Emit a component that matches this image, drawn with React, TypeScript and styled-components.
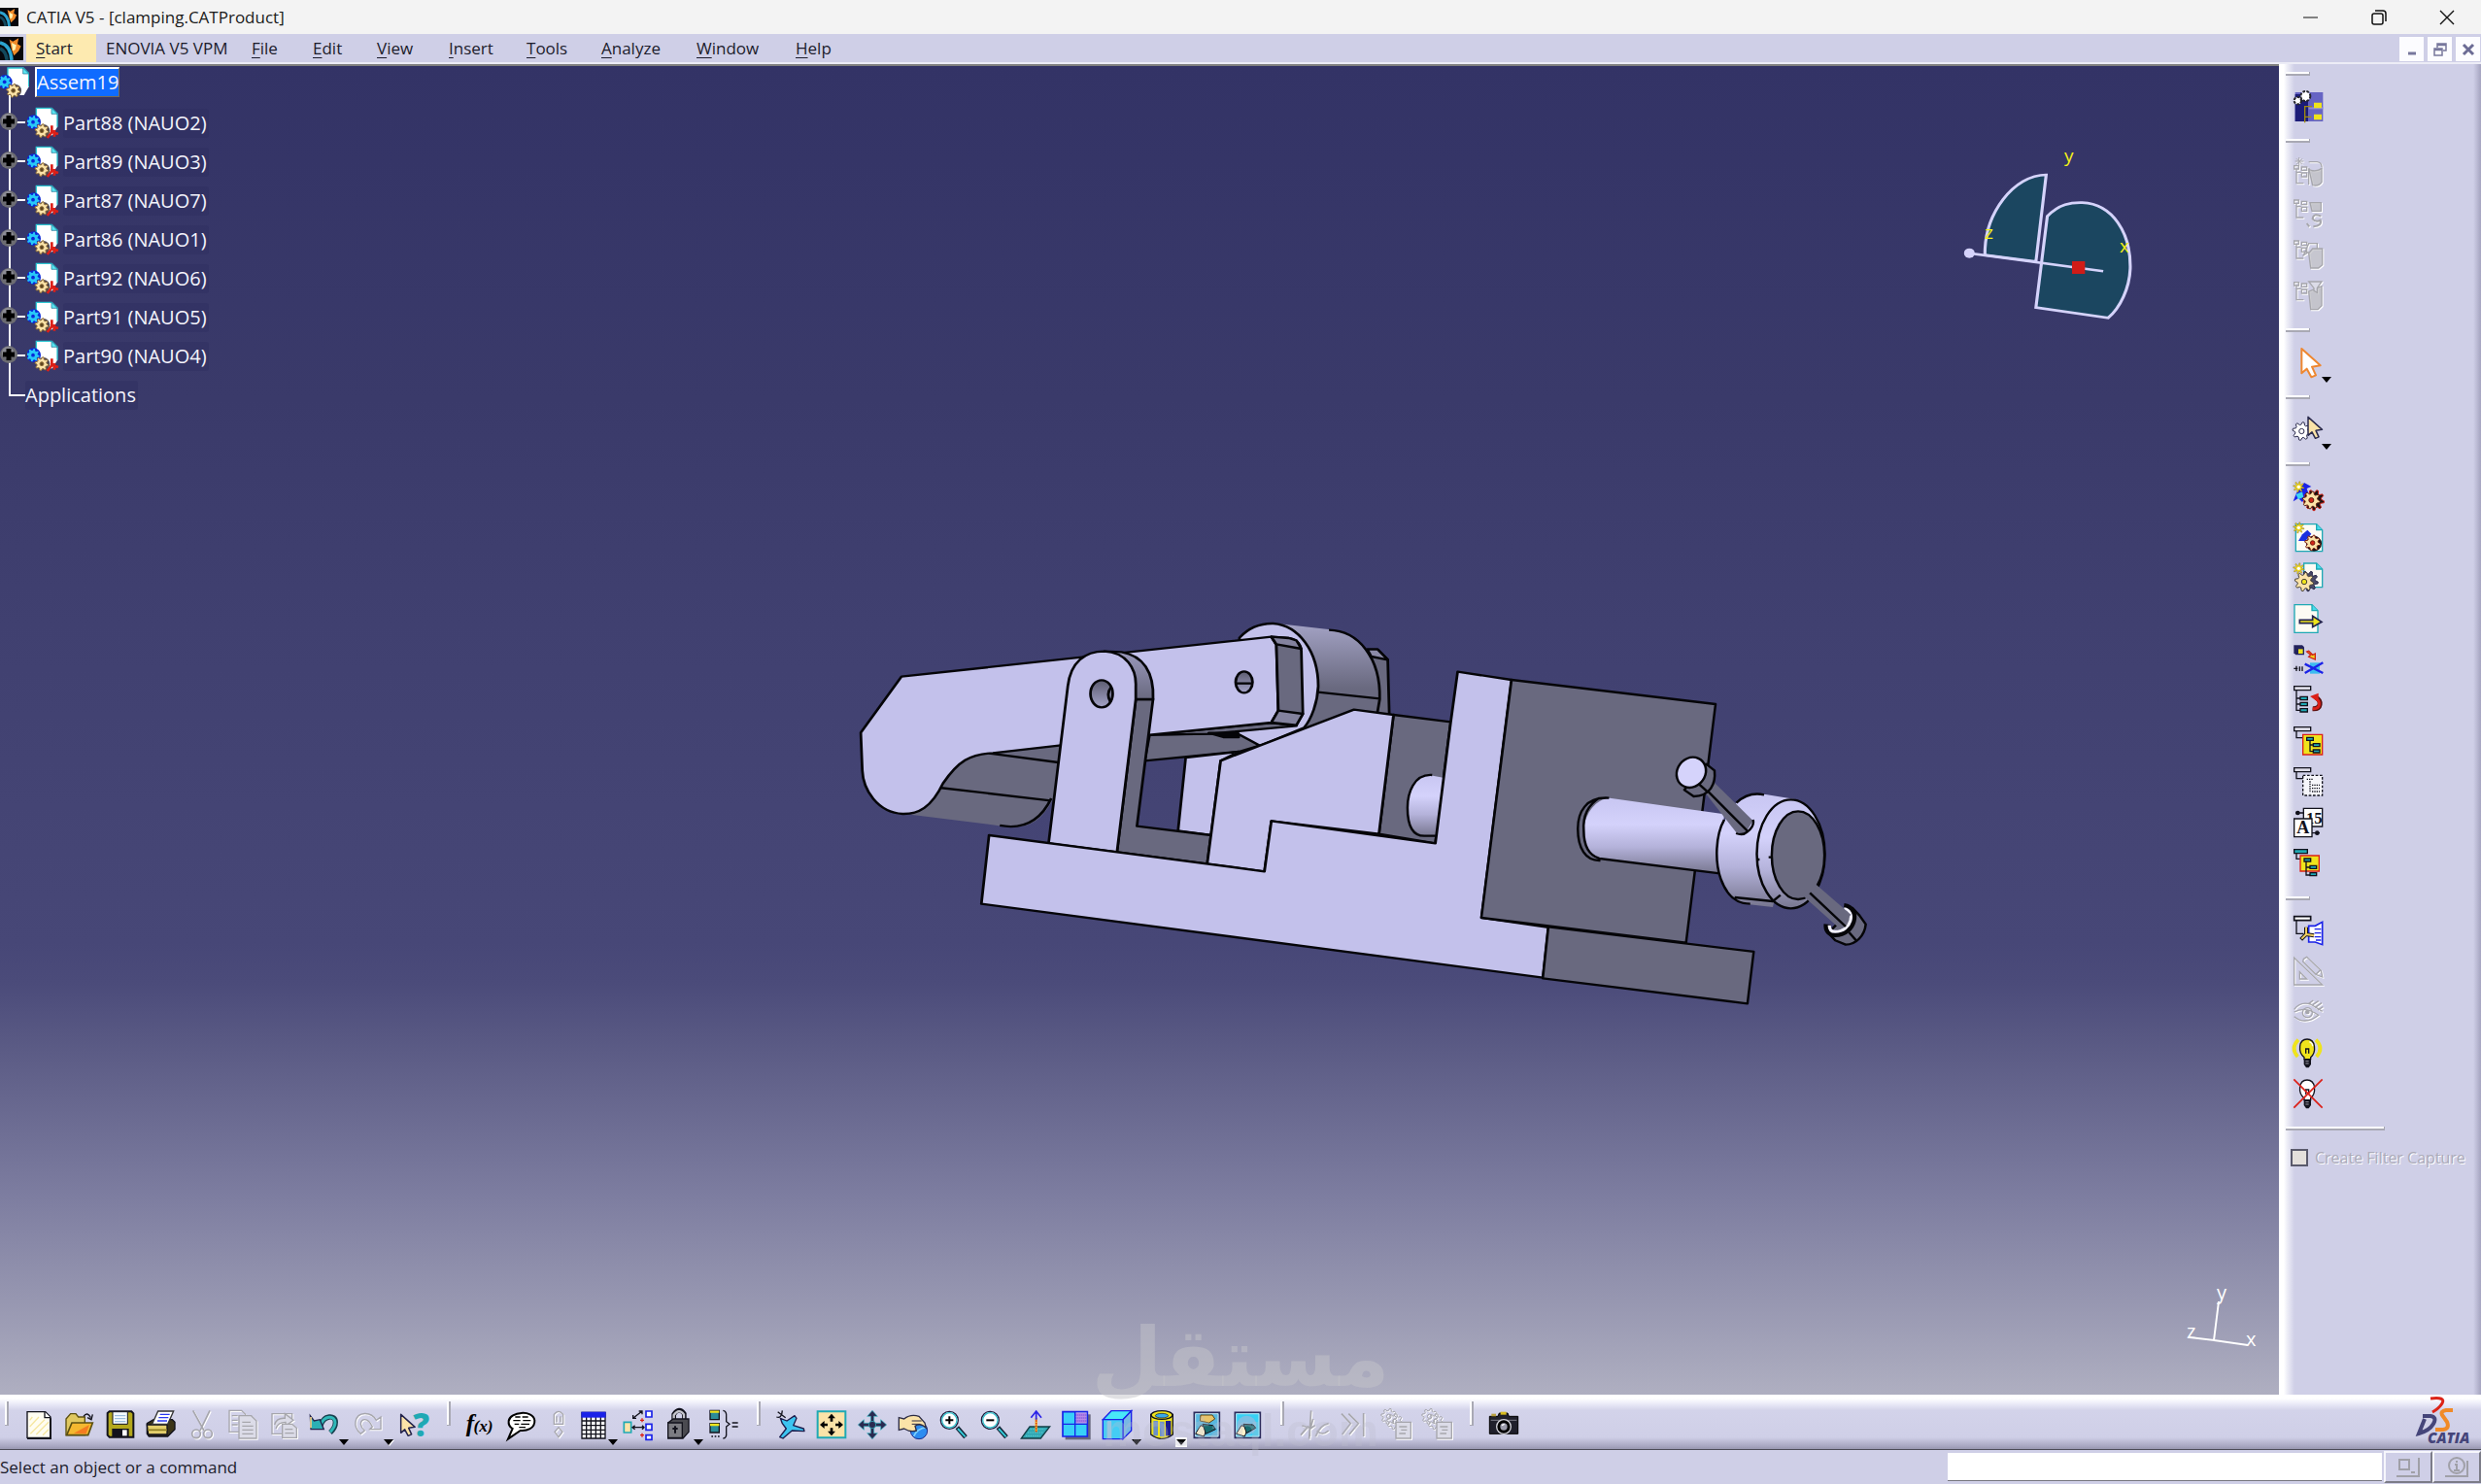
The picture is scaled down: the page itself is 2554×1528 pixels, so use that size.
import React from "react";
import styled, { createGlobalStyle } from "styled-components";

const UI = `"Open Sans", "Noto Sans", sans-serif`;
const panel = "#cfcfe7";

const GlobalStyle = createGlobalStyle`
  * { box-sizing: border-box; }
  body { margin: 0; background: ${panel}; font-family: ${UI}; color: #1c1c2c; }
  button { font: inherit; color: inherit; border: 0; padding: 0; background: none; cursor: pointer; }
  ul { list-style: none; margin: 0; padding: 0; }
`;

const Shell = styled.div`
  display: grid;
  grid-template-rows: 35px 33px 1fr 57px 35px;
  height: 100vh;
  overflow: hidden;
`;

const TitleBar = styled.header`
  display: flex;
  align-items: center;
  background: #f3f3f3;
`;
const Title = styled.h1`
  flex: 1;
  margin: 0 0 0 8px;
  font-size: 17px;
  font-weight: 400;
  line-height: 24px;
  color: #1a1a1a;
`;
const WindowButton = styled.button`
  display: grid;
  place-items: center;
  width: 70px;
  height: 32px;
`;

const MenuBar = styled.nav`
  display: flex;
  align-items: stretch;
  background: ${panel};
  border-bottom: 2px solid #7f7f7f;
  box-shadow: inset 0 -2px 0 #ececf6;
  padding-bottom: 2px;
`;
const MenuIcon = styled.div`
  display: flex;
  align-items: center;
  width: 27px;
`;
const MenuItem = styled.button<{ $width: number; $active?: boolean }>`
  width: ${(p) => p.$width}px;
  padding-left: 10px;
  text-align: left;
  white-space: nowrap;
  font-size: 17px;
  line-height: 29px;
  background: ${(p) => (p.$active ? "#fdeab0" : "none")};
`;
const Key = styled.span`
  text-decoration: underline;
  text-underline-offset: 3px;
`;
const ChildControls = styled.div`
  display: flex;
  gap: 4px;
  margin-left: auto;
  padding: 3px 1px 1px 0;
`;
const ChildButton = styled.button`
  display: grid;
  place-items: center;
  width: 25px;
  background: #fcfcff;
`;

const Work = styled.div`
  display: grid;
  grid-template-columns: 1fr 208px;
  min-height: 0;
`;
const Viewport = styled.main`
  position: relative;
  min-width: 0;
  overflow: hidden;
  background: linear-gradient(#333366 0%, #3a3a6a 25%, #404070 42%, #474777 66%, #4b4b7a 69%, #5b5b85 74%, #7d7da0 85%, #9797b1 93%, #afafc1 100%);
`;
const Scene = styled.svg`
  position: absolute;
  inset: 0;
  width: 100%;
  height: 100%;
`;
const Tree = styled.ul`
  position: relative;
  color: #f4f4fc;
  font-size: 20px;
`;
const TreeRow = styled.li`
  display: flex;
  align-items: center;
  height: 40px;
`;
const RootRow = styled(TreeRow)`
  height: 39px;
  align-items: flex-start;
`;
const Toggle = styled.button`
  display: block;
  width: 28px;
  height: 40px;
`;
const NodeLabel = styled.span<{ $gap?: number }>`
  margin-left: ${(p) => p.$gap ?? 0}px;
  padding-right: 2px;
  line-height: 30px;
  border-radius: 3px;
  background: rgba(44, 44, 96, 0.4);
`;
const SelectedLabel = styled.span`
  margin: 1px 0 0 6px;
  line-height: 28px;
  background: #0f6bff;
  border: 1px solid #7a6a50;
  border-top: 2px solid #fff;
  border-left: 2px solid #fff;
`;

const Side = styled.aside`
  padding: 8px 0 0 7px;
  margin-top: -2px;
  background: linear-gradient(90deg, #fff 0 5px, #f0f0f8 8px, ${panel} 16px calc(100% - 8px), #a5a4c0 100%);
`;
const SideGroup = styled.section`
  display: flex;
  flex-direction: column;
  align-items: flex-start;
  padding-bottom: 13px;
`;
const SideHandle = styled.div<{ $wide?: boolean }>`
  width: ${(p) => (p.$wide ? 102 : 25)}px;
  height: 4px;
  margin-bottom: ${(p) => (p.$wide ? 16 : 10)}px;
  background: #fff;
  border-right: 1px solid #a5a5b0;
  border-bottom: 2px solid #a9a9b4;
`;
const ToolButton = styled.button<{ $width?: number; $disabled?: boolean }>`
  position: relative;
  display: flex;
  align-items: center;
  flex: none;
  width: 48px;
  height: 42px;
  padding-left: 7px;
  color: #a6a6ac;
  svg { overflow: visible; flex: none; }
  filter: ${(p) => (p.$disabled ? "drop-shadow(1px 1px 0 #fff)" : "none")};
`;
const DropMark = styled.span<{ $boxed?: boolean }>`
  position: absolute;
  right: 0;
  bottom: -2px;
  padding: 2px 1px;
  background: ${(p) => (p.$boxed ? "#fff" : "none")};
  &::after {
    content: "";
    display: block;
    border: 5px solid transparent;
    border-top: 6px solid #000;
    border-bottom: 0;
  }
`;
const CheckRow = styled.label`
  display: flex;
  align-items: center;
  gap: 7px;
  margin-left: 5px;
  color: #abaab8;
  font-size: 16px;
  line-height: 24px;
  white-space: nowrap;
  text-shadow: 1px 1px 0 #fff;
`;
const Check = styled.input`
  appearance: none;
  width: 18px;
  height: 18px;
  margin: 0;
  background: #e4e0dc;
  border: 2px solid #5a5a6c;
`;

const ToolBar = styled.div`
  display: flex;
  align-items: flex-start;
  background: linear-gradient(#fff 0 4px, #f0f0fa 8px, #d3d3ea 16px, ${panel} 44px, #a3a2bc 54px, #9c9bb5 55px);
  border-bottom: 1px solid #4c4c58;
  padding: 7px 0 0 5px;
`;
const BarGroup = styled.section`
  display: flex;
  align-items: flex-start;
  padding-right: 12px;
`;
const BarHandle = styled.div`
  width: 4px;
  height: 25px;
  margin-right: 11px;
  background: #fff;
  border-right: 2px solid #a9a9b4;
  border-bottom: 1px solid #a9a9b4;
`;
const BarTool = styled(ToolButton)`
  width: ${(p) => p.$width ?? 42}px;
  margin-top: 3px;
  padding-left: ${(p) => (p.$width === 32 ? 0 : 4)}px;
`;
const Brand = styled.svg`
  margin: -5px 4px 0 auto;
  overflow: visible;
  flex: none;
`;

const StatusBar = styled.footer`
  display: flex;
  align-items: center;
  background: ${panel};
  font-size: 17px;
`;
const StatusText = styled.span`
  flex: 1;
`;
const CommandInput = styled.input`
  width: 447px;
  height: 29px;
  margin-right: 2px;
  padding: 0 6px;
  border: 0;
  border-bottom: 1px solid #77777f;
  background: #fff;
  font: inherit;
`;
const StatusButton = styled.button`
  display: grid;
  place-items: center;
  width: 50px;
  height: 33px;
  color: #a0a0a8;
  border: 2px solid #f6f6fc;
  border-right-color: #7c7c88;
  border-bottom-color: #7c7c88;
`;

/* ---------- icons, drawn on a 96-unit grid ---------- */

const K = "#12121c";
const TEAL = "#1fa9b4";
const CREAM = "#fbe3a8";
const YEL = "#efe41c";

function gearPath(cx: number, cy: number, r: number, teeth: number, depth: number) {
  const pts: string[] = [];
  for (let i = 0; i < teeth * 4; i++) {
    const a = ((i + 0.5) / (teeth * 4)) * Math.PI * 2;
    const rr = i % 4 < 2 ? r : r - depth;
    pts.push(`${(cx + Math.cos(a) * rr).toFixed(1)},${(cy + Math.sin(a) * rr).toFixed(1)}`);
  }
  return `M${pts.join("L")}Z`;
}

const Gear = ({ x, y, r, fill, stroke, hole = fill, teeth = 8 }: { x: number; y: number; r: number; fill: string; stroke: string; hole?: string; teeth?: number }) => (
  <g stroke={stroke} strokeWidth={3}>
    <path d={gearPath(x, y, r, teeth, r * 0.28)} fill={fill} />
    <circle cx={x} cy={y} r={r * 0.28} fill={hole} />
  </g>
);

const Star = ({ x = 19, y = 19 }: { x?: number; y?: number }) => (
  <g stroke="#5a4a10" strokeWidth={1}>
    <path d={gearPath(x, y, 17, 8, 8)} fill="#f4dc20" />
    <circle cx={x} cy={y} r={5} fill="#fff" stroke="none" />
  </g>
);

const Page = ({ x = 35, y = 3, w = 57, h = 74 }: { x?: number; y?: number; w?: number; h?: number }) => (
  <g stroke={TEAL} strokeWidth={4}>
    <path d={`M${x} ${y}h${w - 18}l18 18v${h - 18}h${-w}z`} fill="#fdfbf4" />
    <path d={`M${x + w - 18} ${y}v18h18`} fill="#48dcec" />
  </g>
);

const Pointer = ({ x, y, s = 1, fill, stroke }: { x: number; y: number; s?: number; fill: string; stroke: string }) => (
  <path transform={`translate(${x} ${y}) scale(${s})`} d="M0 0V76L16 62L30 88L44 82L32 56L58 52Z" fill={fill} stroke={stroke} strokeWidth={6} strokeLinejoin="round" />
);

const Bulb = ({ fill }: { fill: string }) => (
  <g>
    <path d="M36 62C16 46 18 6 45 6S74 46 56 62V68H36Z" fill={fill} stroke={K} strokeWidth={4} />
    <path d="M41 50V36H50V50" fill="none" stroke={K} strokeWidth={4} />
    <path d="M35 66H57V84L50 94H42L35 84Z" fill={K} />
    <path d="M40 74h10M40 81h10" stroke="#9a9aa8" strokeWidth={3} />
    <path d="M52 14q10 4 10 14" fill="none" stroke="#fff" strokeWidth={4} />
  </g>
);

const TreeFrame = () => (
  <g fill="none" stroke={K} strokeWidth={4}>
    <path d="M5 5H56V17H5Z" fill="#dedde8" />
    <path d="M12 17V38H42" />
  </g>
);

const GreyTree = ({ y = 22 }: { y?: number }) => (
  <g fill="none" stroke="currentColor" strokeWidth={4}>
    <path d={`M5 ${y}h14v10h-14zM12 ${y + 10}v44h22M12 ${y + 20}h14M28 ${y + 4}h16v10h-16zM28 ${y + 22}h16v12h-16z`} />
  </g>
);

const GreyCylinder = () => (
  <g stroke="currentColor" strokeWidth={4}>
    <path d="M50 34C56 44 78 44 90 34V76Q82 90 62 86Z" fill="currentColor" fillOpacity={0.55} />
    <path d="M50 14H76Q90 16 90 30M50 36V84" fill="none" />
  </g>
);

const Note = ({ x, y }: { x: number; y: number }) => (
  <g fill="none" stroke="currentColor" strokeWidth={4}>
    <path d={`M${x} ${y}h46v50h-46z`} fill="#dcdce8" />
    <path d={`M${x + 10} ${y + 14}h24M${x + 16} ${y + 24}h18M${x + 10} ${y + 35}h20`} />
  </g>
);

const Lens = ({ minus }: { minus?: boolean }) => (
  <g>
    <path d="M58 56L84 86" stroke="#123" strokeWidth={14} />
    <path d="M60 60L83 85" stroke="#36cbd8" strokeWidth={6} />
    <circle cx={34} cy={34} r={27} fill="#fff" stroke="#1c1c3c" strokeWidth={4} />
    <circle cx={34} cy={34} r={23} fill="none" stroke="#35c2ce" strokeWidth={4} />
    <path d={minus ? "M22 34H46" : "M22 34H46M34 22V46"} stroke="#000" strokeWidth={6} />
  </g>
);

const glyphs: Record<string, React.ReactNode> = {
  workbench: (
    <g>
      <path d="M8 6H94V96H8Z" fill="#6664c4" /><path d="M8 12H48V96H8Z" fill="#1c1c78" />
      <path d="M50 52H94V58H50Z" fill="#8f8cda" />
      <path d="M66 38h24v17h-24zM66 74h24v17h-24z" fill={YEL} />
      <path d="M60 50H38V100M38 82H58" fill="none" stroke="#a08a10" strokeWidth={4} />
      <g fill="#fff" stroke="#26262c" strokeWidth={6} strokeDasharray="8 4"><circle cx={40} cy={18} r={15} /><circle cx={16} cy={32} r={11} /></g>
    </g>
  ),
  greyNew: <g><path d="M20 0v26M8 12h26M12 4l18 18M30 4l-18 18" stroke="currentColor" strokeWidth={3} /><GreyTree y={26} /><GreyCylinder /></g>,
  greyLink: <g><GreyTree y={6} /><path d="M54 14H88V40H60Z" fill="currentColor" fillOpacity={0.55} stroke="currentColor" strokeWidth={4} /><path d="M88 56q-24-12-26 8q10 12 24 4q6 18-22 20M44 78l8 10" fill="none" stroke="currentColor" strokeWidth={6} /></g>,
  greyCut: <g><GreyTree y={6} /><path d="M50 44L62 30H92V80L80 90H56Z" fill="currentColor" fillOpacity={0.5} stroke="currentColor" strokeWidth={4} /><path d="M76 30V14H50L34 50L50 40" fill="none" stroke="currentColor" strokeWidth={4} /></g>,
  greyFilter: <g><GreyTree y={8} /><path d="M50 36L90 20V80L78 92H56Z" fill="currentColor" fillOpacity={0.55} stroke="currentColor" strokeWidth={4} /><path d="M50 6H90L76 26V40L66 34V26Z" fill="#dcdce8" stroke="currentColor" strokeWidth={4} /></g>,
  select: <Pointer x={28} y={6} fill="#fff" stroke="#ee8730" />,
  gearSelect: <g><Gear x={28} y={54} r={28} fill="#fff" stroke="#2a2a4c" /><Pointer x={48} y={10} s={0.75} fill={CREAM} stroke="#2a2a4c" /></g>,
  component: (
    <g>
      <path d="M36 6L58 18L44 24L50 42L30 66L18 54L2 64L12 38Z" fill="#1a22e8" /><path d="M10 42L30 34L34 50L18 58Z" fill="#3cd4f4" />
      <Star /><Gear x={66} y={60} r={32} fill="#1a1214" stroke="#d02418" teeth={9} /><Gear x={58} y={60} r={27} fill={CREAM} stroke="#5a2010" hole="#d02418" />
    </g>
  ),
  product: <g><Page x={10} y={8} w={82} h={84} /><path d="M30 40L46 26L58 38L40 60L18 60Z" fill="#1a30e0" /><Star /><circle cx={66} cy={68} r={24} fill="#1a1214" /><Gear x={62} y={66} r={24} fill={CREAM} stroke="#7a1c10" hole="#d02418" /></g>,
  part: <g><Page /><Star /><Gear x={48} y={58} r={31} fill="#4a4a68" stroke="#26264a" teeth={9} /><Gear x={36} y={60} r={29} fill={CREAM} stroke="#4a4438" hole={YEL} /></g>,
  existing: <g><Page x={6} y={5} w={72} h={86} /><path d="M22 52H62V40L90 58L62 74V62H22Z" fill={YEL} stroke="#23234c" strokeWidth={5} /></g>,
  replace: (
    <g>
      <path d="M4 4H30L36 10V34H10L4 28Z" fill="#23235c" /><path d="M18 16H32V30H18Z" fill={YEL} />
      <path d="M44 24L56 34L50 40L70 48V30L62 34L50 22Z" fill="#f0d020" stroke="#d02418" strokeWidth={4} />
      <path d="M54 58H84V92H54Z" fill="#3cbcf0" /><path d="M38 62L94 90M94 58L38 90" stroke="#1a22e8" strokeWidth={7} />
      <path d="M4 76h12M12 68v16M22 70v14M30 70v14" stroke={K} strokeWidth={4} />
    </g>
  ),
  reorder: (
    <g>
      <path d="M5 5H56V17H5Z" fill="#dedde8" stroke={K} strokeWidth={4} /><path d="M12 17V79H24M12 42H24M12 60H24" fill="none" stroke={K} strokeWidth={4} />
      <g fill={TEAL} stroke={K} strokeWidth={4}><path d="M24 37h22v10H24zM24 55h22v10H24zM24 74h22v10H24z" /></g>
      <path d="M62 74C90 76 90 48 72 40" fill="none" stroke="#5a1010" strokeWidth={15} /><path d="M62 74C88 76 88 50 70 42" fill="none" stroke="#dc2018" strokeWidth={9} /><path d="M54 36L80 26V54Z" fill="#dc2018" />
    </g>
  ),
  numbering: <g><TreeFrame /><path d="M32 28H92V90H32Z" fill={YEL} stroke="#dc2018" strokeWidth={4} /><path d="M54 46V80H64M54 60H64" fill="none" stroke={K} strokeWidth={4} /><g fill={TEAL} stroke={K} strokeWidth={4}><path d="M44 37h20v9H44zM64 56h20v9H64zM64 75h20v9H64z" /></g></g>,
  dashed: <g><TreeFrame /><path d="M32 28H92V90H32Z" fill="#f6f6fb" stroke={K} strokeWidth={4} strokeDasharray="8 5" /><path d="M44 40h20M54 46v36M60 58h24M60 68h24M60 78h24" stroke={K} strokeWidth={4} strokeDasharray="4 3" /></g>,
  a15: (
    <g fill="#fff" stroke={K} strokeWidth={4}>
      <path d="M34 4H92V60H34Z" /><text x={42} y={50} fontFamily="Liberation Serif" fontWeight="700" fontSize={50} fill={K} stroke="none">15</text>
      <path d="M5 36H60V92H5Z" /><text x={13} y={82} fontFamily="Liberation Serif" fontWeight="700" fontSize={54} fill={K} stroke="none">A</text>
      <path d="M10 18H34M60 80H84" /><circle cx={16} cy={18} r={5} fill={K} /><circle cx={76} cy={80} r={5} fill={K} />
    </g>
  ),
  selective: <g><path d="M5 5H46V17H5Z" fill={TEAL} stroke={K} strokeWidth={4} /><path d="M12 17V34H30" fill="none" stroke={K} strokeWidth={4} /><path d="M24 24H82V72H24Z" fill={YEL} stroke="#dc2018" strokeWidth={4} /><path d="M42 40V84H54M42 60H54" fill="none" stroke={K} strokeWidth={4} /><g fill={TEAL} stroke={K} strokeWidth={4}><path d="M36 33h20v9H36zM54 55h20v9H54zM54 77h20v9H54z" /></g></g>,
  constraint: (
    <g>
      <path d="M5 5H56V17H5Z" fill="#fff" stroke={K} strokeWidth={5} /><path d="M12 17V58H34" fill="none" stroke={K} strokeWidth={4} />
      <path d="M50 34H70L92 22V92L70 84H50Z" fill="#fff" stroke="#1a22e8" strokeWidth={5} /><path d="M68 44h20M68 56h20M68 68h20M72 78h16" stroke="#1a22e8" strokeWidth={4} />
      <path d="M42 38V60L26 76M42 60L66 64" fill="none" stroke={K} strokeWidth={12} /><path d="M42 38V60L28 74M42 60L66 64" fill="none" stroke="#f0cc60" strokeWidth={6} />
    </g>
  ),
  greySketch: <g fill="none" stroke="currentColor" strokeWidth={4}><path d="M5 6V90H92Z" /><path d="M22 50V72H44Z" /><path d="M34 10L44 4L88 46L92 66L72 58L32 18ZM72 58L86 44" /></g>,
  greyEye: <g fill="none" stroke="currentColor" strokeWidth={4}><path d="M5 40Q24 14 56 24L92 46M5 48Q40 28 80 58Q40 90 5 62" /><circle cx={46} cy={50} r={15} /><circle cx={46} cy={48} r={5} fill="currentColor" /><path d="M50 22L64 12M62 26L80 14M70 34L90 20M78 42L94 32" /></g>,
  bulbOn: <g><path d="M18 8Q-8 34 16 60M72 8Q98 34 74 60" fill="none" stroke={YEL} strokeWidth={11} /><Bulb fill={YEL} /></g>,
  bulbOff: <g><Bulb fill="#fff" /><path d="M4 4L92 92M92 4L4 92" stroke="#dc2018" strokeWidth={5} /></g>,

  newFile: <g><path d="M12 8H68L84 24V88H12Z" fill="#fffdf2" stroke={K} strokeWidth={4} /><path d="M66 8V26H84" fill="#fff" stroke={K} strokeWidth={4} /><path d="M84 28V90H12" fill="none" stroke={K} strokeWidth={6} /><path d="M20 34l8-10M20 54l28-30M22 76l44-44M40 78l38-38M60 80l18-18" stroke="#f6e6a0" strokeWidth={4} /></g>,
  open: <g><path d="M6 30L20 14H36L44 24H64V80H6Z" fill="#e0c860" stroke="#5c5010" strokeWidth={4} /><path d="M8 80L24 42H88L74 80Z" fill="#f4b830" stroke="#5c5010" strokeWidth={5} /><path d="M30 74L78 48L68 76Z" fill="#f47c20" /><path d="M60 22Q72 6 82 26M88 16L84 32L72 26" fill="none" stroke={K} strokeWidth={4} /></g>,
  save: <g><path d="M8 12L14 7H82L88 13V86H14L8 80Z" fill="#b4a81c" stroke={K} strokeWidth={6} /><path d="M24 8H70V46H24Z" fill="#f4faff" stroke={K} strokeWidth={3} /><path d="M30 20h34M30 29h34M30 38h34" stroke="#8cb4d8" strokeWidth={3} /><path d="M22 60H74V86H22Z" fill={K} /><path d="M54 64h14v18H54z" fill="#fff" /></g>,
  print: <g><path d="M4 44L24 32H82L90 40V62L68 84H10L4 76Z" fill="#3c3518" stroke={K} strokeWidth={4} /><path d="M4 48H66V78H8Z" fill="#e4cf6c" stroke={K} strokeWidth={4} /><path d="M6 64H66" stroke="#8c7c20" strokeWidth={5} /><path d="M20 46L38 6H86L68 46Z" fill="#fff" stroke="#333" strokeWidth={4} /><path d="M44 16h30M40 26h30M36 36h30" stroke="#2838f0" strokeWidth={4} /></g>,
  cut: <g fill="none" stroke="currentColor" strokeWidth={5}><path d="M20 4L54 66M72 4L42 66" /><circle cx={30} cy={76} r={13} /><circle cx={66} cy={76} r={13} /></g>,
  copy: <g><path d="M6 4H44L56 16V70H6Z" fill="none" stroke="currentColor" strokeWidth={4} /><path d="M36 20H74L90 36V90H36Z" fill="#dcdce8" stroke="currentColor" strokeWidth={4} /><path d="M46 40h26M46 52h34M46 64h34M46 76h34M14 20h18M14 34h18M14 48h18" stroke="currentColor" strokeWidth={4} /></g>,
  paste: <g fill="none" stroke="currentColor" strokeWidth={4}><path d="M74 30V14H12V76H42" /><path d="M20 48Q26 26 52 28V14L78 34L54 52V40Q30 40 24 60" fill="#dcdce8" /><path d="M44 46H74L88 58V88H44Z" fill="#dcdce8" /><path d="M52 62h24M52 74h28" /></g>,
  undo: <g><path d="M36 50C46 18 82 16 82 40Q82 58 66 72" fill="none" stroke="#17404e" strokeWidth={16} /><path d="M36 50C46 18 82 18 81 42Q80 56 66 70" fill="none" stroke="#30b8b8" strokeWidth={9} /><path d="M4 20L16 36L34 32L46 62H6Z" fill="#2cb0b4" stroke="#23234c" strokeWidth={4} /><path d="M6 24V58" stroke="#f4d890" strokeWidth={5} /></g>,
  redo: <g fill="none" stroke="currentColor" strokeWidth={4}><path d="M58 54C44 24 22 28 22 46Q24 58 34 66L22 76Q2 58 6 38C12 6 54 6 70 34L84 24V62H50Z" /></g>,
  whatsThis: <g><text x={46} y={84} fontFamily="Open Sans" fontWeight="800" fontSize={100} fill="#1fa9b4">?</text><Pointer x={8} y={16} s={0.75} fill={CREAM} stroke="#23234c" /></g>,
  formula: <text x={2} y={70} fontFamily="Liberation Serif" fontWeight="700" fontStyle="italic" fontSize={76} fill="#000">f<tspan fontSize={52} dx={-2}>(x)</tspan></text>,
  comment: <g><path d="M8 36C12 8 82 0 88 34C90 60 62 68 44 66L6 92L20 60Q6 52 8 36Z" fill="#fff" stroke="#000" strokeWidth={6} /><path d="M28 24h16M50 24h18M22 35h22M52 35h24M26 46h14M46 46h26M40 56h20" stroke="#000" strokeWidth={4} /></g>,
  greyLock: <g fill="none" stroke="currentColor" strokeWidth={4}><path d="M34 46V16Q48 -2 62 16V46ZM42 22V40M54 22V40M36 46h24" /><path d="M48 56L60 70L48 86L36 70Z" /></g>,
  table: <g><path d="M12 10H84V90H12Z" fill="#fff" stroke={K} strokeWidth={4} /><path d="M12 36H84M12 50H84M12 64H84M12 77H84M26 24V90M40 24V90M55 24V90M70 24V90" stroke={K} strokeWidth={4} /><path d="M10 8H86V26H10Z" fill="#1a22e8" /></g>,
  relations: <g><path d="M4 40H26V72H4Z" fill={CREAM} stroke={TEAL} strokeWidth={5} /><g fill="#fff" stroke="#1a22e8" strokeWidth={5}><path d="M72 6h18v18H72zM72 46h18v18H72zM72 80h18v14H72z" /></g><path d="M30 56H66M38 50L30 56L38 62M60 50L66 56L60 62M32 28L60 6M32 18V28H42M50 6H60V16" fill="none" stroke={K} strokeWidth={4} /><path d="M54 34h12M60 28v12M54 80h12M60 74v12" stroke="#dc2018" strokeWidth={4} /></g>,
  padlock: <g><path d="M32 42V16Q48 -8 64 14V36" fill="none" stroke={K} strokeWidth={14} /><path d="M32 42V18Q48 -4 63 16V36" fill="none" stroke="#c4c4cc" strokeWidth={7} /><path d="M14 42L30 30H78V70L60 90H14Z" fill="#4a4a50" stroke={K} strokeWidth={4} /><path d="M14 42H58V88H14Z" fill="#7c7c82" stroke={K} strokeWidth={4} /><path d="M36 52v22M28 60h16" stroke={K} strokeWidth={6} /></g>,
  equal: <g fill="none" stroke={K} strokeWidth={4}><path d="M6 4H34V32H6ZM6 44H34V72H6Z" fill="#2c8c98" /><path d="M6 8H34M6 48H34" stroke={YEL} strokeWidth={7} /><path d="M46 4Q58 6 56 24V38L66 46L56 54V72Q58 90 46 90" /><path d="M74 42H92M74 54H92M10 84h5M20 84h5M30 84h5" /></g>,
  fly: <g><path d="M16 28L36 36L60 20L66 28L56 50L88 60L90 68L52 66L24 90L14 86L34 60L22 44Z" fill="#3cc4f0" stroke="#1c1c4c" strokeWidth={4} strokeLinejoin="round" /><path d="M4 24Q20 30 22 4M8 8L32 26" fill="none" stroke={K} strokeWidth={4} /></g>,
  fit: <g><path d="M5 7H91V88H5Z" fill={CREAM} stroke={TEAL} strokeWidth={6} /><path d="M48 14L60 28H52V38H44V28H36ZM48 82L36 68H44V58H52V68H60ZM12 48L26 36V44H36V52H26V60ZM84 48L70 60V52H60V44H70V36Z" fill="#000" /></g>,
  pan: <g stroke="#35b9c5" strokeWidth={2} fill="#2a2a50"><path d="M48 4L64 22H53V40H43V22H32ZM48 92L32 74H43V56H53V74H64ZM4 48L22 32V43H40V53H22V64ZM92 48L74 64V53H56V43H74V32Z" /><circle cx={48} cy={48} r={11} /></g>,
  rotate: <g><circle cx={66} cy={66} r={26} fill="#2c8cf0" stroke="#1c2c8c" strokeWidth={3} /><path d="M50 84Q60 60 88 56" stroke="#7cd0fc" strokeWidth={5} fill="none" /><path d="M4 26L20 30Q40 14 66 22L84 42L88 58Q70 40 54 52L58 66Q40 72 20 60L4 64Z" fill={CREAM} stroke="#2c2c44" strokeWidth={4} /><path d="M44 36H74M44 46H70" stroke="#2c2c44" strokeWidth={3} /></g>,
  zoomIn: <Lens />,
  zoomOut: <Lens minus />,
  normal: <g><path d="M30 54H92L64 90H4Z" fill="#30a8b4" stroke="#123c44" strokeWidth={4} /><path d="M32 62H76M24 72H70M18 82H62" stroke="#7ce0e4" strokeWidth={2} strokeDasharray="4 3" /><path d="M50 70V28" stroke="#f0b020" strokeWidth={7} /><path d="M50 70V28" stroke="#dc2018" strokeWidth={4} strokeDasharray="4 4" /><path d="M34 26L50 6L66 26M50 8V32" fill="none" stroke="#2a22e8" strokeWidth={5} /></g>,
  views: <g><path d="M14 16H92V94H14Z" fill="#67677c" /><path d="M6 8H82V84H6Z" fill="#38d0f8" stroke="#1a22e8" strokeWidth={5} /><path d="M46 10H80V44H46Z" fill="#b88ae8" /><path d="M46 18H80M46 27H80M46 36H80" stroke="#5a30d8" strokeWidth={3} strokeDasharray="3 3" /><path d="M44 8V84M6 46H82" stroke="#1a22e8" strokeWidth={4} /></g>,
  cube: <g stroke="#1a22e8" strokeWidth={4}><path d="M4 32L30 5H92L66 32Z" fill="#48e8f8" /><path d="M66 32L92 5V66L66 92Z" fill="#78b8e4" /><path d="M4 32H66V92H4Z" fill="#44ccf4" /><path d="M24 36V90" stroke="#8cc8e8" strokeWidth={12} /></g>,
  shading: <g><path d="M14 16V78Q48 104 82 78V16Z" fill={YEL} stroke={K} strokeWidth={4} /><path d="M22 36H36V82H22ZM42 38H56V84H42Z" fill="#6c90c8" /><path d="M60 36H76V82H60Z" fill="#1c1c90" /><ellipse cx={48} cy={18} rx={33} ry={13} fill={YEL} stroke={K} strokeWidth={4} /><ellipse cx={48} cy={20} rx={20} ry={7} fill="#38a8e8" stroke={K} strokeWidth={2} /></g>,
  hide: <g><path d="M10 10H88V88H10Z" fill="#58b8e0" stroke="#2c2c5c" strokeWidth={5} /><path d="M14 14H84V84H14Z" fill="none" stroke="#fff" strokeWidth={2} /><path d="M30 18H66L74 30L56 42L28 36Z" fill="#e8c468" stroke="#5c4414" strokeWidth={3} /><path d="M14 76L30 50L50 58L40 84Z" fill="#fff4cc" stroke={K} strokeWidth={3} /><path d="M36 46L68 50L76 62L46 76Z" fill="#186c70" stroke={K} strokeWidth={3} /></g>,
  swap: <g><path d="M10 10H88V88H10Z" fill="#38d0f4" stroke="#2c2c5c" strokeWidth={5} /><path d="M14 14H84V84H14Z" fill="none" stroke="#fff" strokeWidth={2} /><circle cx={46} cy={50} r={30} fill="#7cc0e4" /><path d="M14 76L30 50L50 58L40 84Z" fill="#fff4cc" stroke={K} strokeWidth={3} /><path d="M36 46L66 48L74 58L46 74Z" fill="#186c70" stroke={K} strokeWidth={3} /></g>,
  greyBreak: <g fill="none" stroke="currentColor" strokeWidth={5}><path d="M6 80L30 52M10 50L34 58V84M38 4L32 92M44 30L36 60L50 50M52 84Q66 48 92 44M56 66Q72 84 92 66" /></g>,
  greySkip: <g fill="none" stroke="currentColor" strokeWidth={5}><path d="M6 14L34 44L8 78M28 14L58 44L30 78M74 12V84" /></g>,
  greyLayers: <g><Gear x={26} y={22} r={24} fill="none" stroke="currentColor" /><Gear x={44} y={38} r={24} fill="none" stroke="currentColor" /><Note x={48} y={40} /></g>,
  camera: <g><path d="M4 22H30L34 12H60L64 22H92V76H4Z" fill="#20202c" stroke="#000" strokeWidth={3} /><path d="M8 34H88" stroke="#7c7c88" strokeWidth={3} /><path d="M38 8h18v9H38z" fill="#d8bc20" /><path d="M10 14h14v8H10z" fill="#b8a040" /><circle cx={48} cy={54} r={22} fill="#000" stroke="#d4d4dc" strokeWidth={4} /><circle cx={48} cy={54} r={11} fill="#9c9cac" /><path d="M42 50l8-4" stroke="#fff" strokeWidth={4} /></g>,
};

const Glyph = ({ name }: { name: string }) => (
  <svg width={32} height={32} viewBox="0 0 96 96" aria-hidden="true">{glyphs[name]}</svg>
);

const AppIcon = ({ size }: { size: number }) => (
  <svg width={size} height={size} viewBox="4 0 20 20" aria-hidden="true">
    <rect x={4} width={20} height={20} fill="#07070c" />
    <path d="M12 2L15 4L20 1L19 6L22 8L20 12L16 16L14 11Z" fill="#f08a28" />
    <path d="M14 5L18 7L17 11L15 12Z" fill="#fff2b0" />
    <path d="M4 5Q13 7 14 20" fill="none" stroke="#2ca4d0" strokeWidth={3} />
    <path d="M4 10Q9 12 10 20" fill="none" stroke="#12485c" strokeWidth={3} />
  </svg>
);

/* ---------- specification tree ---------- */

const NodeArt = ({ part }: { part?: boolean }) => (
  <g>
    <path d="M28 4H76L93 21V62L78 88H60L28 70Z" fill="#fff" />
    <path d="M28 30V4H76L93 21V62" fill="none" stroke="#30c8d4" strokeWidth={4} />
    <path d="M75 4V22H93Z" fill="#5ce8f4" stroke="#1a6c8c" strokeWidth={2} />
    <circle cx={20} cy={47} r={22} fill="#0a28d8" />
    <Gear x={18} y={47} r={20} fill="#28c8f8" stroke="none" hole="#0a28d8" />
    <circle cx={50} cy={74} r={20} fill="#4c4450" />
    <Gear x={45} y={74} r={21} fill={CREAM} stroke="#8c6c38" hole="#5c4420" />
    {part && <path d="M76 58V78L62 96M76 78L96 84M84 72V92" fill="none" stroke="#dc2018" strokeWidth={8} />}
  </g>
);

const NodeIcon = () => (
  <svg width={34} height={34} viewBox="0 0 102 102" aria-hidden="true"><NodeArt part /></svg>
);

const Branch = () => (
  <svg width={28} height={40} viewBox="0 0 28 40" aria-hidden="true">
    <path d="M10 0V40M10 19H26" stroke="#fff" strokeWidth={2} />
    <circle cx={9} cy={18} r={9} fill="#6c6c72" />
    <circle cx={8} cy={16} r={6} fill="#8c8c94" />
    <path d="M3 18H15M9 12V24" stroke="#000" strokeWidth={5} />
  </svg>
);

const parts = ["Part88 (NAUO2)", "Part89 (NAUO3)", "Part87 (NAUO7)", "Part86 (NAUO1)", "Part92 (NAUO6)", "Part91 (NAUO5)", "Part90 (NAUO4)"];

const SpecTree = () => (
  <Tree>
    <RootRow>
      <svg width={30} height={39} viewBox="0 0 90 117" aria-hidden="true">
        <path d="M30 90V117" stroke="#fff" strokeWidth={6} />
        <g transform="translate(-4 2)"><NodeArt /></g>
      </svg>
      <SelectedLabel>Assem19</SelectedLabel>
    </RootRow>
    {parts.map((name) => (
      <TreeRow key={name}>
        <Toggle aria-label={`Expand ${name}`}><Branch /></Toggle>
        <NodeIcon />
        <NodeLabel $gap={3}>{name}</NodeLabel>
      </TreeRow>
    ))}
    <TreeRow>
      <svg width={26} height={40} viewBox="0 0 26 40" aria-hidden="true"><path d="M10 0V20H26" fill="none" stroke="#fff" strokeWidth={2} /></svg>
      <NodeLabel>Applications</NodeLabel>
    </TreeRow>
  </Tree>
);

/* ---------- 3D scene ---------- */

const L = "#c3c1eb";
const D = "#69697f";

const Model = () => (
  <Scene viewBox="0 68 2346 1368" preserveAspectRatio="xMidYMid meet" role="img" aria-label="Clamping assembly">
    <defs>
      <linearGradient id="shaft" x1="0" y1="0" x2="0" y2="1"><stop offset="0" stopColor="#c8c6f2" /><stop offset="0.35" stopColor="#d4d2fb" /><stop offset="0.65" stopColor="#b4b2da" /><stop offset="1" stopColor="#77768f" /></linearGradient>
      <linearGradient id="roller" x1="0" y1="0" x2="0" y2="1"><stop offset="0" stopColor="#a3a2c4" /><stop offset="0.6" stopColor={D} /></linearGradient>
      <linearGradient id="hole" x1="0" y1="0" x2="0" y2="1"><stop offset="0" stopColor="#5c5c70" /><stop offset="1" stopColor="#a4a3c8" /></linearGradient>
      <linearGradient id="post" x1="0" y1="0" x2="0" y2="1"><stop offset="0" stopColor="#9a99bc" /><stop offset="1" stopColor={D} /></linearGradient>
    </defs>
    {/* lever, roller, bracket and jaw */}
    <g transform="translate(860 620) scale(0.3954 0.3333)" stroke="#050508" strokeWidth={7} strokeLinejoin="round">
      <path d="M1385 146L1412 146L1438 178L1442 348H1405Z" fill={D} />
      <path d="M1385 146L1412 146L1438 178L1395 168Z" fill="#8c8ba8" />
      <path d="M1150 66L1300 86C1360 95 1417 180 1417 300L1410 348L1200 400Z" fill="url(#roller)" stroke="none" />
      <path d="M1285 86C1360 88 1420 170 1417 300L1410 348M1256 278L1417 298" fill="none" />
      <path d="M1052 110C1075 80 1105 65 1140 66C1205 72 1257 150 1257 260C1255 310 1240 360 1220 388L1103 445L1040 405Z" fill={L} />
      <path d="M818 410L972 406L1045 405L1105 443L1050 462L805 490Z" fill={D} />
      <path d="M818 410L1135 373L1200 382L975 407Z" fill={D} />
      <path d="M972 404H1048L1050 417H1010Z" fill="#050508" />
      <path d="M410 466L590 443L570 600C540 670 510 705 435 692L195 656C240 640 260 600 280 560C320 490 350 470 410 466Z" fill={D} stroke="none" />
      <path d="M400 467L580 495M270 573L560 613M428 690C500 706 540 660 562 606" fill="none" />
      <path d="M172 230L1135 107L1148 132L1153 335L1135 372L818 410L582 443L410 466C350 470 320 490 280 560C250 635 215 655 175 654C110 650 72 580 70 520L66 403Z" fill={L} />
      <path d="M1135 107L1180 111C1205 116 1213 135 1213 150L1217 345L1200 380L1135 372L1153 335L1148 130Z" fill={D} />
      <path d="M1148 130L1213 144L1200 118L1180 111L1135 107ZM1153 335L1217 345L1200 380L1135 372Z" fill="#83829e" />
      <ellipse cx={1064} cy={247} rx={22} ry={33} fill="url(#hole)" /><path d="M1042 251H1086" />
      <path d="M912 480L1050 462L1003 490L978 720L892 706Z" fill={L} />
      <path d="M782 300L827 300L785 692L978 720L968 808L733 772Z" fill={D} />
      <path d="M700 152L745 154C800 165 830 215 827 300L782 300Z" fill="url(#post)" />
      <path d="M555 745L605 260C612 185 650 152 700 152C757 155 784 205 782 260V300L733 772Z" fill={L} />
      <ellipse cx={693} cy={283} rx={29} ry={42} fill="url(#hole)" /><path d="M718 262Q704 283 716 308" fill="none" />
      <path d="M1453 348L1602 370L1562 745L1415 716Z" fill={D} />
      <path d="M1003 490L1105 443L1350 332L1453 348L1415 716L1135 676L1117 832L968 808Z" fill={L} />
    </g>
    <g transform="translate(1400 640) scale(0.3571 0.3333)" stroke="#050508" strokeWidth={7}>
      <path d="M240 482L195 473C155 475 137 530 137 575C137 635 160 666 220 662Z" fill="url(#shaft)" stroke="none" />
      <path d="M208 474C155 470 137 530 137 575C137 625 150 662 185 662L218 662" fill="none" />
    </g>
    {/* base plate */}
    <g transform="translate(860 620) scale(0.3954 0.3333)" stroke="#050508" strokeWidth={7} strokeLinejoin="round">
      <path d="M400 720L1117 832L1135 676L1562 745L1602 370L1620 215L1760 240L1682 975L1856 1005L1842 1160L380 932Z" fill={L} />
    </g>
    {/* fixed block, spindle and handle */}
    <g transform="translate(1400 640) scale(0.3571 0.3333)" stroke="#050508" strokeWidth={7} strokeLinejoin="round">
      <path d="M543 943L1135 1020L1117 1180L527 1102Z" fill={D} />
      <path d="M437 180L1025 255L940 992L350 915Z" fill={D} />
      <path d="M720 545L1050 595L1035 778L690 735C660 730 642 690 645 640C650 590 680 548 720 545Z" fill="url(#shaft)" stroke="none" />
      <path d="M718 545C650 540 628 590 628 640C628 700 650 740 693 738M690 545C660 565 642 600 645 645C645 690 660 722 690 732L1038 778" fill="none" />
      <path d="M1085 560C1110 535 1135 528 1165 533L1260 550L1190 882L1110 872C1060 860 1032 800 1030 720C1030 650 1055 600 1085 560Z" fill="url(#shaft)" stroke="none" />
      <path d="M1085 560C1110 535 1135 528 1165 535M1050 612C1025 660 1022 740 1040 795C1055 840 1080 872 1125 872M1080 852L1190 864" fill="none" />
      <ellipse cx={1242} cy={718} rx={98} ry={168} fill="url(#shaft)" />
      <ellipse cx={1263} cy={722} rx={76} ry={136} fill={D} />
      <path d="M1144 735H1152M1187 728H1178M1212 845L1188 866" />
      <path d="M985 498L1022 498L1133 615L1110 656L1085 652L985 515Z" fill={D} stroke="none" />
      <path d="M985 505L1116 646M1133 612Q1138 632 1116 650Q1104 662 1084 654" fill="none" />
      <path d="M998 440L1022 460C1026 500 1010 540 962 540L935 520Z" fill={D} />
      <path d="M978 503L1000 524" />
      <ellipse cx={955} cy={466} rx={41} ry={48} transform="rotate(25 955 466)" fill="#d5d3fb" />
      <path d="M1420 885L1440 908L1458 935C1455 970 1430 998 1400 998L1370 985L1350 962Z" fill={D} />
      <path d="M1395 880C1440 885 1425 965 1370 965C1355 965 1345 955 1347 935" fill="none" strokeWidth={20} />
      <path d="M1395 887C1430 892 1418 958 1370 958C1358 958 1353 950 1353 938" fill="none" stroke="#f2f1ff" strokeWidth={9} />
      <path d="M1280 850L1315 812L1415 905L1385 950Z" fill={D} stroke="none" />
      <path d="M1297 838L1400 942M1410 960L1430 985" />
    </g>

    {/* compass */}
    <g transform="translate(1940 0) scale(0.3915 0.3333)" fill="#1b4660" stroke="#d5d3fb" strokeWidth={8}>
      <path d="M425 540C340 540 262 660 264 788L398 808Z" />
      <path d="M428 668C460 630 490 625 520 626C600 630 648 720 646 830C644 890 620 950 588 982L398 950Z" />
      <path d="M222 782L575 838" fill="none" />
      <ellipse cx={223} cy={782} rx={14} ry={15} fill="#d5d3fb" stroke="none" />
      <rect x={493} y={807} width={34} height={39} fill="#d01c18" stroke="none" />
    </g>
    <g fill="#f4f018" fontFamily="Open Sans, sans-serif" fontSize={19}>
      <text x={2125} y={167}>y</text><text x={2043} y={246}>z</text><text x={2182} y={260}>x</text>
    </g>

    {/* axis system */}
    <g fill="none" stroke="#fff" strokeWidth={2}><path d="M2284 1340L2279 1380L2254 1377M2279 1380L2314 1385" /></g>
    <g fill="#fff" fontFamily="Open Sans, sans-serif" fontSize={20}>
      <text x={2282} y={1338}>y</text><text x={2251} y={1378}>z</text><text x={2312} y={1386}>x</text>
    </g>
  </Scene>
);

const Watermark = styled.div`
  position: fixed;
  left: 50%;
  bottom: 28px;
  width: 320px;
  margin-left: -160px;
  text-align: center;
  pointer-events: none;
  color: rgba(196, 196, 202, 0.5);
`;
const WatermarkName = styled.div`
  font: 700 84px/98px "DejaVu Sans", sans-serif;
`;
const WatermarkSite = styled.div`
  color: rgba(190, 190, 205, 0.3);
  font: 700 46px/53px "Liberation Sans", sans-serif;
`;

/* ---------- toolbars ---------- */

type Tool = { icon: string; label: string; drop?: boolean; boxed?: boolean; off?: boolean; width?: number };
const t = (icon: string, label: string, extra: Partial<Tool> = {}): Tool => ({ icon, label, ...extra });

const sideGroups: Tool[][] = [
  [t("workbench", "Assembly Design")],
  [t("greyNew", "New cache", { off: true }), t("greyLink", "Link cache", { off: true }), t("greyCut", "Section cache", { off: true }), t("greyFilter", "Filter", { off: true })],
  [t("select", "Select", { drop: true })],
  [t("gearSelect", "Select component", { drop: true })],
  [t("component", "Component"), t("product", "Product"), t("part", "Part"), t("existing", "Existing Component"), t("replace", "Replace Component"), t("reorder", "Graph tree Reordering"), t("numbering", "Generate Numbering"), t("dashed", "Selective Load"), t("a15", "Manage Representations"), t("selective", "Multi Instantiation")],
  [t("constraint", "Product Initialization"), t("greySketch", "Sketch", { off: true }), t("greyEye", "Show", { off: true }), t("bulbOn", "Activate"), t("bulbOff", "Deactivate")],
];

const barGroups: Tool[][] = [
  [t("newFile", "New"), t("open", "Open"), t("save", "Save"), t("print", "Print"), t("cut", "Cut", { off: true }), t("copy", "Copy", { off: true }), t("paste", "Paste", { off: true }), t("undo", "Undo", { drop: true, width: 46 }), t("redo", "Redo", { off: true, drop: true, width: 46 }), t("whatsThis", "What's This?")],
  [t("formula", "Formula"), t("comment", "Comment"), t("greyLock", "Check", { off: true, width: 32 }), t("table", "Design Table", { drop: true, width: 46 }), t("relations", "Relations"), t("padlock", "Lock", { drop: true, width: 46 }), t("equal", "Equivalent Dimensions")],
  [t("fly", "Fly Mode"), t("fit", "Fit All In"), t("pan", "Pan"), t("rotate", "Rotate"), t("zoomIn", "Zoom In"), t("zoomOut", "Zoom Out"), t("normal", "Normal View"), t("views", "Create Multi-View"), t("cube", "Isometric View", { drop: true, width: 46 }), t("shading", "Shading", { drop: true, boxed: true, width: 46 }), t("hide", "Hide/Show"), t("swap", "Swap visible space")],
  [t("greyBreak", "Update", { off: true }), t("greySkip", "Skip", { off: true }), t("greyLayers", "Layers", { off: true }), t("greyLayers", "Layer filter", { off: true })],
  [t("camera", "Capture")],
];

const menus: { key: string; rest: string; width: number; active?: boolean }[] = [
  { key: "S", rest: "tart", width: 72, active: true },
  { key: "", rest: "ENOVIA V5 VPM", width: 150 },
  { key: "F", rest: "ile", width: 63 },
  { key: "E", rest: "dit", width: 66 },
  { key: "V", rest: "iew", width: 74 },
  { key: "I", rest: "nsert", width: 80 },
  { key: "T", rest: "ools", width: 77 },
  { key: "A", rest: "nalyze", width: 98 },
  { key: "W", rest: "indow", width: 102 },
  { key: "H", rest: "elp", width: 60 },
];

export default function App() {
  return (
    <>
      <GlobalStyle />
      <Shell>
        <TitleBar>
          <AppIcon size={19} />
          <Title>CATIA V5 - [clamping.CATProduct]</Title>
          <WindowButton aria-label="Minimize"><svg width={16} height={16}><path d="M0 8H15" stroke="#111" strokeWidth={1} /></svg></WindowButton>
          <WindowButton aria-label="Restore"><svg width={16} height={16} fill="none" stroke="#111" strokeWidth={1.5}><rect x={1} y={4} width={11} height={11} rx={2} /><path d="M4 1H12Q15 1 15 4V12" /></svg></WindowButton>
          <WindowButton aria-label="Close"><svg width={16} height={16} stroke="#111" strokeWidth={1.4}><path d="M1 1L15 15M15 1L1 15" /></svg></WindowButton>
        </TitleBar>

        <MenuBar>
          <MenuIcon><AppIcon size={24} /></MenuIcon>
          {menus.map((m) => (
            <MenuItem key={m.rest} $width={m.width} $active={m.active}>
              {m.key && <Key>{m.key}</Key>}{m.rest}
            </MenuItem>
          ))}
          <ChildControls>
            <ChildButton aria-label="Minimize document"><svg width={14} height={14}><path d="M3 11H11" stroke="#77779c" strokeWidth={3} /></svg></ChildButton>
            <ChildButton aria-label="Restore document"><svg width={14} height={14} fill="none" stroke="#77779c" strokeWidth={1.5}><path d="M4 5V1H13V8H10M4 2.5H13" /><path d="M1 6H9V13H1ZM1 7.5H9" /></svg></ChildButton>
            <ChildButton aria-label="Close document"><svg width={14} height={14} stroke="#6b6b94" strokeWidth={3}><path d="M2 2L12 12M12 2L2 12" /></svg></ChildButton>
          </ChildControls>
        </MenuBar>

        <Work>
          <Viewport>
            <Model />
            <SpecTree />
          </Viewport>
          <Side>
            {sideGroups.map((group, i) => (
              <SideGroup key={i}>
                <SideHandle />
                {group.map((tool) => (
                  <ToolButton key={tool.label} aria-label={tool.label} $disabled={tool.off}>
                    <Glyph name={tool.icon} />
                    {tool.drop && <DropMark />}
                  </ToolButton>
                ))}
              </SideGroup>
            ))}
            <SideHandle $wide />
            <CheckRow><Check type="checkbox" />Create Filter Capture</CheckRow>
          </Side>
        </Work>

        <ToolBar>
          {barGroups.map((group, i) => (
            <BarGroup key={i}>
              <BarHandle />
              {group.map((tool) => (
                <BarTool key={tool.label} aria-label={tool.label} $disabled={tool.off} $width={tool.width}>
                  <Glyph name={tool.icon} />
                  {tool.drop && <DropMark $boxed={tool.boxed} />}
                </BarTool>
              ))}
            </BarGroup>
          ))}
          <Brand width={62} height={52} viewBox="0 0 62 52" role="img" aria-label="Dassault Systemes CATIA">
            <path d="M14 2Q30 0 26 7Q23 12 16 16" fill="none" stroke="#dc2418" strokeWidth={3} />
            <path d="M37 14H30Q24 15 26 19L31 26Q34 33 27 34H19" fill="none" stroke="#f08a28" strokeWidth={4} />
            <path d="M6 20H14Q21 21 17 28Q13 35 2 38L8 23" fill="none" stroke="#45457a" strokeWidth={4} />
            <text x={11} y={48} fontFamily="Open Sans, sans-serif" fontWeight="800" fontStyle="italic" fontSize={15} fill="#45457a">CATIA</text>
          </Brand>
        </ToolBar>

        <StatusBar>
          <StatusText>Select an object or a command</StatusText>
          <CommandInput aria-label="Power input" />
          <StatusButton aria-label="Command window"><svg width={24} height={22} fill="none" stroke="currentColor" strokeWidth={2}><path d="M3 3H13V13H3ZM15 16H19M23 1V20H0" /></svg></StatusButton>
          <StatusButton aria-label="Information"><svg width={24} height={22} fill="none" stroke="currentColor" strokeWidth={2}><circle cx={12} cy={9} r={8} /><path d="M10 8H12V14M9 14H15M12 4V6M23 4V20H0" /></svg></StatusButton>
        </StatusBar>
      </Shell>
      <Watermark aria-hidden="true">
        <WatermarkName>مستقل</WatermarkName>
        <WatermarkSite>mostaql.com</WatermarkSite>
      </Watermark>
    </>
  );
}
